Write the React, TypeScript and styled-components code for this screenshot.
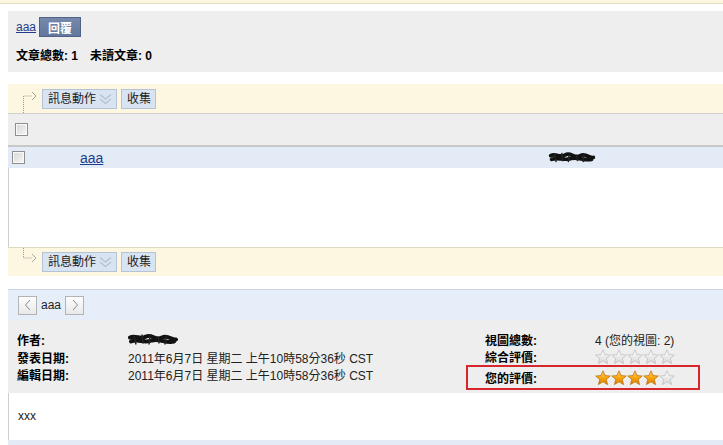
import React from "react";
import styled, { createGlobalStyle } from "styled-components";

const GlobalStyle = createGlobalStyle`
  html, body {
    margin: 0;
    padding: 0;
    background: #fff;
    overflow: hidden;
  }
  body {
    font-family: "Liberation Sans", Arial, "Noto Sans CJK TC", sans-serif;
    font-size: 12px;
    color: #000;
  }
`;

function Connector({ down, y, height }: { down: boolean; y: number; height: number }) {
  return (
    <ConnectorSvg width="16" height={height} viewBox={`0 0 16 ${height}`}>
      <path
        d={down ? `M1.5 ${height} V${y} H10` : `M1.5 0 V${y} H10`}
        fill="none"
        stroke="#9a9a9a"
        strokeDasharray="1 1"
      />
      <path d={`M10 ${y - 4} L14 ${y} L10 ${y + 4}`} fill="none" stroke="#a8a8a8" />
    </ConnectorSvg>
  );
}

function DoubleChevron() {
  return (
    <svg width="13" height="12" viewBox="0 0 13 12">
      <path d="M1 1.5 L6.5 6 L12 1.5" fill="none" stroke="#b9c4d2" strokeWidth="1.6" />
      <path d="M1 6 L6.5 10.5 L12 6" fill="none" stroke="#b9c4d2" strokeWidth="1.6" />
    </svg>
  );
}

function Toolbar({ down, y }: { down: boolean; y: number }) {
  return (
    <ToolbarBar down={down}>
      <Connector down={down} y={y} height={down ? 29 : 28} />
      <ToolButton>
        訊息動作
        <DoubleChevron />
      </ToolButton>
      <ToolButton>收集</ToolButton>
    </ToolbarBar>
  );
}

function Star({ filled, id }: { filled: boolean; id: string }) {
  return (
    <svg width="16" height="16" viewBox="0 0 16 16">
      <defs>
        <linearGradient id={id} x1="0" y1="0" x2="0" y2="1">
          {filled ? (
            <>
              <stop offset="0" stopColor="#ffd36a" />
              <stop offset="0.55" stopColor="#f5a20a" />
              <stop offset="1" stopColor="#d77d00" />
            </>
          ) : (
            <>
              <stop offset="0" stopColor="#ffffff" />
              <stop offset="1" stopColor="#d6d6d6" />
            </>
          )}
        </linearGradient>
      </defs>
      <path
        d="M8 0.8 L10.1 5.6 L15.3 6 L11.3 9.4 L12.6 14.6 L8 11.8 L3.4 14.6 L4.7 9.4 L0.7 6 L5.9 5.6 Z"
        fill={`url(#${id})`}
        stroke={filled ? "#b86a00" : "#b8b8b8"}
        strokeWidth="0.7"
      />
    </svg>
  );
}

function Stars({ value, name }: { value: number; name: string }) {
  return (
    <StarRow>
      {[0, 1, 2, 3, 4].map((i) => (
        <Star key={i} filled={i < value} id={`${name}-${i}`} />
      ))}
    </StarRow>
  );
}

function Scribble({ width, height }: { width: number; height: number }) {
  return (
    <svg width={width} height={height} viewBox="0 0 50 14">
      <path
        d="M2 5 C8 2 12 8 18 4 C24 1 28 9 34 5 C40 2 44 8 48 7 M3 9 C10 6 16 11 24 8 C32 6 38 11 46 9"
        fill="none"
        stroke="#111"
        strokeWidth="4"
        strokeLinecap="round"
      />
      <path d="M6 3 L8 12 M14 2 L15 11 M22 3 L21 12 M30 4 L31 11 M38 3 L37 12" stroke="#222" strokeWidth="1.5" />
    </svg>
  );
}

function NavArrow({ dir }: { dir: "prev" | "next" }) {
  return (
    <NavButton>
      <svg width="8" height="12" viewBox="0 0 8 12">
        <path
          d={dir === "prev" ? "M6 1 L1.5 6 L6 11" : "M2 1 L6.5 6 L2 11"}
          fill="none"
          stroke="#8a8a8a"
          strokeWidth="1"
        />
      </svg>
    </NavButton>
  );
}

export default function App() {
  return (
    <>
      <GlobalStyle />
      <Page>
        <TopStrip />
        <Main>
          <Summary>
            <ReplyRow>
              <Link>aaa</Link>
              <ReplyButton>回覆</ReplyButton>
            </ReplyRow>
            <Counts>
              <span>文章總數: 1</span>
              <span>未讀文章: 0</span>
            </Counts>
          </Summary>

          <Toolbar down y={12} />
          <HeaderRow>
            <CheckBox />
          </HeaderRow>
          <MessageRow>
            <CheckBox />
            <Link big>aaa</Link>
            <ScribbleCell>
              <Scribble width={54} height={13} />
            </ScribbleCell>
          </MessageRow>
          <EmptyList />
          <Toolbar down={false} y={10} />

          <NavBar>
            <NavArrow dir="prev" />
            <NavTitle>aaa</NavTitle>
            <NavArrow dir="next" />
          </NavBar>
          <Meta>
            <MetaColumn>
              <MetaRow>
                <Label>作者:</Label>
                <Value>
                  <Scribble width={50} height={15} />
                </Value>
              </MetaRow>
              <MetaRow>
                <Label>發表日期:</Label>
                <Value>2011年6月7日 星期二 上午10時58分36秒 CST</Value>
              </MetaRow>
              <MetaRow>
                <Label>編輯日期:</Label>
                <Value>2011年6月7日 星期二 上午10時58分36秒 CST</Value>
              </MetaRow>
            </MetaColumn>
            <RatingColumn>
              <RatingRow>
                <Label>視圖總數:</Label>
                <Value>4 (您的視圖: 2)</Value>
              </RatingRow>
              <RatingRow>
                <Label>綜合評價:</Label>
                <Stars value={0} name="avg" />
              </RatingRow>
              <RatingRow highlighted>
                <Label>您的評價:</Label>
                <Stars value={4} name="mine" />
              </RatingRow>
            </RatingColumn>
          </Meta>
          <MessageBody>xxx</MessageBody>
          <BottomStrip />
        </Main>
      </Page>
    </>
  );
}

const Page = styled.div`
  width: 723px;
  height: 445px;
  overflow: hidden;
`;

const TopStrip = styled.div`
  height: 3px;
  background: #fcf6df;
  border-bottom: 1px solid #e4dcc2;
`;

const Main = styled.div`
  margin-left: 8px;
  padding-top: 7px;
  width: 730px;
`;

const Summary = styled.div`
  height: 61px;
  box-sizing: border-box;
  padding: 6px 0 0 8px;
  background: #eeeeee;
  margin-bottom: 12px;
`;

const ReplyRow = styled.div`
  display: flex;
  align-items: center;
  gap: 3px;
  height: 20px;
`;

const Link = styled.a<{ big?: boolean }>`
  color: #1d3d8c;
  text-decoration: underline;
  font-size: ${(p) => (p.big ? "14px" : "12px")};
  cursor: pointer;
`;

const ReplyButton = styled.button`
  height: 20px;
  width: 42px;
  padding: 0;
  border: 1px solid #4f6287;
  background: linear-gradient(#7689ad, #63779c);
  color: #fff;
  font-weight: bold;
  font-size: 12px;
  font-family: inherit;
`;

const Counts = styled.div`
  display: flex;
  gap: 12px;
  margin-top: 12px;
  line-height: 14px;
  font-weight: bold;
`;

const ToolbarBar = styled.div<{ down: boolean }>`
  display: flex;
  align-items: center;
  gap: 4px;
  height: ${(p) => (p.down ? "29px" : "28px")};
  padding-left: 14px;
  background: #fdf7e2;
  border-top: ${(p) => (p.down ? "none" : "1px solid #ddd8c4")};
  border-bottom: ${(p) => (p.down ? "1px solid #d0d0d0" : "none")};
  margin-bottom: ${(p) => (p.down ? "0" : "13px")};
`;

const ConnectorSvg = styled.svg`
  align-self: stretch;
  height: 100%;
`;

const ToolButton = styled.div`
  display: flex;
  align-items: center;
  gap: 3px;
  height: 18px;
  padding: 0 4px 0 5px;
  border: 1px solid #b4c3d6;
  background: #d9e4f2;
  color: #1a1a1a;
  font-family: "Liberation Sans", "Noto Sans CJK TC", sans-serif;
  font-size: 12px;
  line-height: 18px;
`;

const HeaderRow = styled.div`
  display: flex;
  align-items: center;
  height: 31px;
  padding-left: 7px;
  background: #eeeeee;
  border-bottom: 2px solid #c8c8c8;
`;

const CheckBox = styled.div`
  width: 11px;
  height: 11px;
  border: 1px solid #8f8f8f;
  background: linear-gradient(135deg, #d6d6d6, #f7f7f7);
  box-shadow: inset 0 0 0 1px #fafafa;
`;

const MessageRow = styled.div`
  display: grid;
  grid-template-columns: 68px 465px auto;
  align-items: center;
  height: 21px;
  padding-left: 4px;
  background: #e3ebf6;
`;

const ScribbleCell = styled.div`
  display: flex;
  align-items: center;
`;

const EmptyList = styled.div`
  height: 79px;
  border-left: 1px solid #cfcfcf;
  background: #fff;
`;

const NavBar = styled.div`
  display: flex;
  align-items: center;
  gap: 4px;
  height: 30px;
  padding-left: 10px;
  background: #e6eef9;
  border-top: 1px solid #c9d3e0;
`;

const NavButton = styled.div`
  display: flex;
  align-items: center;
  justify-content: center;
  width: 17px;
  height: 17px;
  border: 1px solid #b3b3b3;
  background: linear-gradient(#fdfdfd, #e9e9e9);
`;

const NavTitle = styled.span`
  color: #222;
  font-size: 12px;
`;

const Meta = styled.div`
  display: flex;
  height: 73px;
  box-sizing: border-box;
  padding-top: 11px;
  background: #eeeeee;
`;

const MetaColumn = styled.div`
  width: 449px;
  padding-left: 9px;
`;

const MetaRow = styled.div`
  display: grid;
  grid-template-columns: 111px auto;
  align-items: center;
  height: 17.5px;
`;

const Label = styled.span`
  font-weight: bold;
  font-size: 12px;
  color: #000;
`;

const Value = styled.span`
  display: flex;
  align-items: center;
  color: #222;
  font-size: 12px;
`;

const RatingColumn = styled.div`
  width: 234px;
`;

const RatingRow = styled.div<{ highlighted?: boolean }>`
  display: grid;
  grid-template-columns: 110px auto;
  align-items: center;
  height: ${(p) => (p.highlighted ? "21px" : "17px")};
  padding-left: ${(p) => (p.highlighted ? "17px" : "19px")};
  border: ${(p) => (p.highlighted ? "2px solid #d8262d" : "none")};
`;

const StarRow = styled.div`
  display: flex;
`;

const MessageBody = styled.div`
  height: 47px;
  box-sizing: border-box;
  padding: 16px 0 0 9px;
  border-left: 1px solid #cfcfcf;
  background: #fff;
  color: #222;
  font-size: 12px;
`;

const BottomStrip = styled.div`
  height: 10px;
  background: #e3ebf7;
`;
